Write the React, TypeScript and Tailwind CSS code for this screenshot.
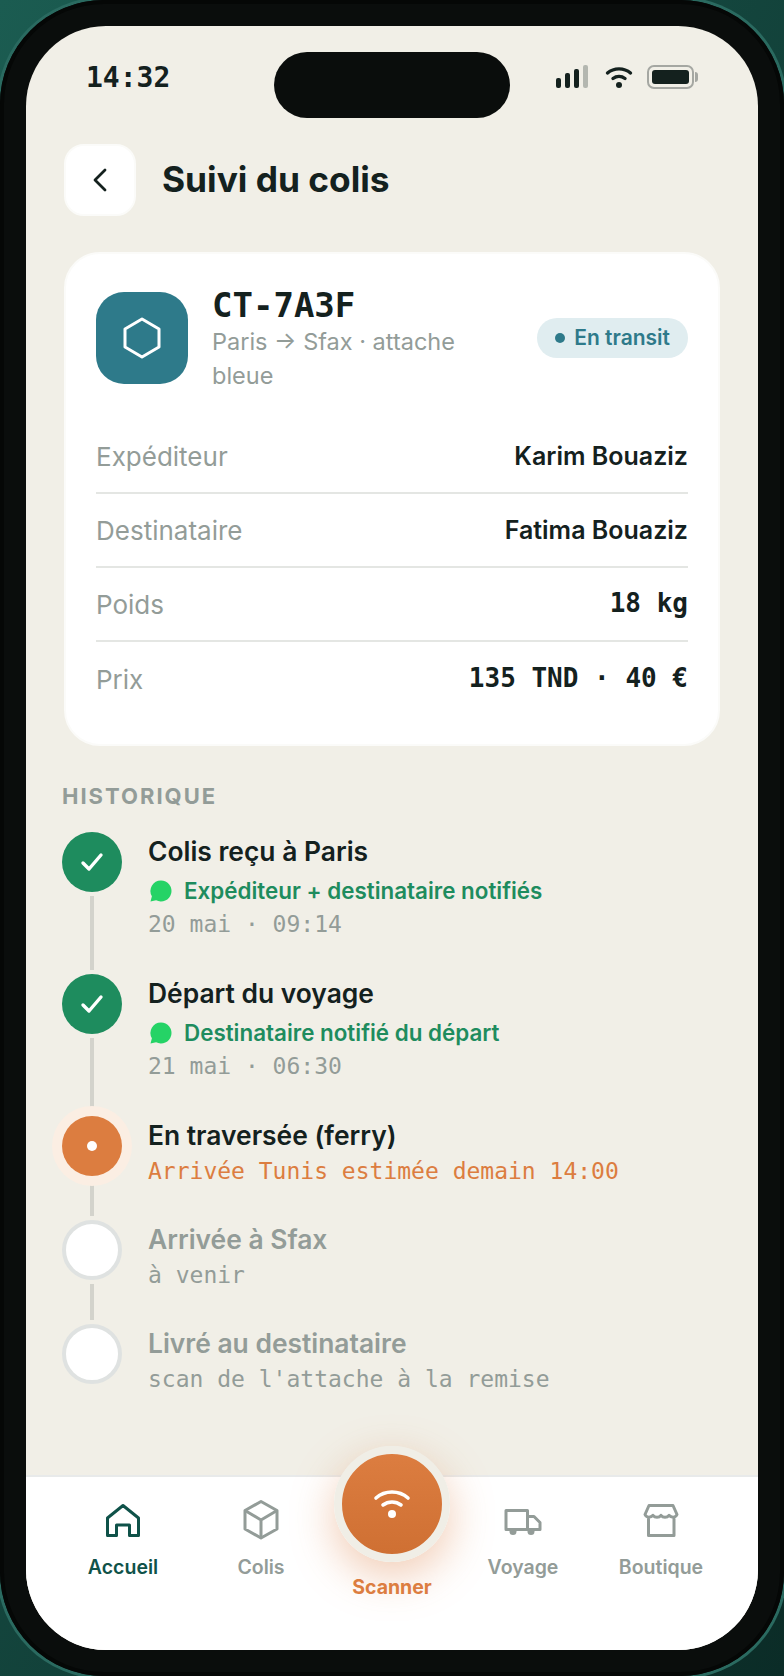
const sans = "font-['Inter','Noto_Sans',sans-serif]";
const mono = "font-['DejaVu_Sans_Mono','Liberation_Mono',monospace]";

type Step = {
  title: string;
  state: "done" | "current" | "todo";
  notice?: string;
  note: string;
};

const details = [
  { label: "Expéditeur", value: "Karim Bouaziz" },
  { label: "Destinataire", value: "Fatima Bouaziz" },
  { label: "Poids", value: "18 kg", numeric: true },
  { label: "Prix", value: "135 TND · 40 €", numeric: true },
];

const steps: Step[] = [
  { title: "Colis reçu à Paris", state: "done", notice: "Expéditeur + destinataire notifiés", note: "20 mai · 09:14" },
  { title: "Départ du voyage", state: "done", notice: "Destinataire notifié du départ", note: "21 mai · 06:30" },
  { title: "En traversée (ferry)", state: "current", note: "Arrivée Tunis estimée demain 14:00" },
  { title: "Arrivée à Sfax", state: "todo", note: "à venir" },
  { title: "Livré au destinataire", state: "todo", note: "scan de l'attache à la remise" },
];

function StatusIcons() {
  return (
    <div className="flex items-center justify-end gap-[14px]">
      <svg width="36" height="24" viewBox="0 0 36 24">
        <rect x="1" y="13" width="5" height="10" rx="2" fill="#14211e" />
        <rect x="10" y="8" width="5" height="15" rx="2" fill="#14211e" />
        <rect x="19" y="4" width="5" height="19" rx="2" fill="#14211e" />
        <rect x="28" y="0" width="5" height="23" rx="2" fill="#b4b7b0" />
      </svg>
      <svg width="28" height="24" viewBox="0 0 28 24" fill="none" stroke="#14211e" strokeWidth="3.4" strokeLinecap="round">
        <path d="M2.5 8C9 2.5 19 2.5 25.5 8" />
        <path d="M8 13.5c3.6-2.8 8.4-2.8 12 0" />
        <circle cx="14" cy="20" r="3" fill="#14211e" stroke="none" />
      </svg>
      <div className="flex items-center gap-[1px]">
        <div className="h-[24px] w-[47px] rounded-[7px] border-2 border-[#a5a7a2] p-[3px]">
          <div className="h-full w-full rounded-[3px] bg-[#14211e]" />
        </div>
        <div className="h-[10px] w-[3px] rounded-r-sm bg-[#a5a7a2]" />
      </div>
    </div>
  );
}

function Marker({ state }: { state: Step["state"] }) {
  if (state === "done") {
    return (
      <div className="flex size-[60px] shrink-0 items-center justify-center rounded-full bg-[#1e8c5e]">
        <svg width="24" height="20" viewBox="0 0 24 20" fill="none" stroke="white" strokeWidth="3.4" strokeLinecap="round" strokeLinejoin="round">
          <path d="M3 11l6 6L21 3" />
        </svg>
      </div>
    );
  }
  if (state === "current") {
    // the halo sits on top of the connector lines
    return (
      <div className="relative z-10 flex size-[60px] shrink-0 items-center justify-center rounded-full bg-[#dc7d40] shadow-[0_0_0_10px_#fbeee3]">
        <div className="size-[10px] rounded-full bg-white" />
      </div>
    );
  }
  return <div className="size-[60px] shrink-0 rounded-full border-4 border-[#dfe2e1] bg-white" />;
}

function NavHome() {
  return (
    <svg width="44" height="44" viewBox="0 0 44 44" fill="none" stroke="#0f5249" strokeWidth="3" strokeLinejoin="round">
      <path d="M22 7.5L37.5 20v17.5h-9V27h-13v10.5h-9V20z" />
    </svg>
  );
}

function NavBox() {
  return (
    <svg width="44" height="44" viewBox="0 0 44 44" fill="none" stroke="#939c98" strokeWidth="3" strokeLinejoin="round">
      <path d="M22 3.5l16 9V31l-16 9-16-9V12.5z" />
      <path d="M6 12.5L22 22l16-9.5M22 22v18" />
    </svg>
  );
}

function NavTruck() {
  return (
    <svg width="44" height="44" viewBox="0 0 44 44" fill="none" stroke="#939c98" strokeWidth="3" strokeLinejoin="round">
      <path d="M5 12.5h21.5V31.5H5z" />
      <path d="M26.5 18.5h6.5l6 6v7H26.5z" />
      <circle cx="12" cy="33.5" r="3.5" fill="#939c98" stroke="none" />
      <circle cx="30" cy="33.5" r="3.5" fill="#939c98" stroke="none" />
    </svg>
  );
}

function NavStore() {
  return (
    <svg width="44" height="44" viewBox="0 0 44 44" fill="none" stroke="#939c98" strokeWidth="3" strokeLinejoin="round" strokeLinecap="round">
      <path d="M10 7.5h24l4 9c-1.5 3.5-5.5 3.5-8 .8-2 2.6-6 2.6-8 0-2 2.6-6 2.6-8 0-2.5 2.7-6.5 2.7-8-.8z" />
      <path d="M9.5 21v16.5h25.5V21" />
    </svg>
  );
}

export default function App() {
  return (
    <div className="h-[1676px] w-[784px] overflow-hidden bg-gradient-to-br from-[#1b5c51] to-[#0b2c27]">
      {/* Phone body */}
      <div className="flex h-full w-full rounded-[104px] bg-[#0a0d0c] p-[26px] shadow-[0_0_0_3px_#2a6a60,inset_0_0_0_4px_#050706]">
        <div className={`flex flex-1 flex-col overflow-hidden rounded-[80px] bg-[#f1efe7] text-[#14211e] ${sans}`}>
          {/* Status bar */}
          <div className="grid h-[118px] shrink-0 grid-cols-[1fr_236px_1fr] px-[60px] pt-[26px]">
            <div className={`pt-[8px] text-[28px] leading-[36px] font-bold ${mono}`}>14:32</div>
            <div className="h-[66px] rounded-full bg-[#0a0d0c]" />
            <div className="pt-[13px]">
              <StatusIcons />
            </div>
          </div>

          <main className="flex-1 px-[38px]">
            <header className="flex items-center gap-[26px]">
              <button className="flex size-[72px] items-center justify-center rounded-[20px] border-2 border-[#fbfbf9] bg-white">
                <svg width="16" height="24" viewBox="0 0 16 24" fill="none" stroke="#14211e" strokeWidth="2.8" strokeLinecap="round" strokeLinejoin="round">
                  <path d="M13 2L3 12l10 10" />
                </svg>
              </button>
              <h1 className="text-[35.3px] leading-[44px] font-bold">Suivi du colis</h1>
            </header>

            {/* Parcel card */}
            <section className="mt-[36px] rounded-[36px] border-2 border-[#fbfbf9] bg-white px-[30px] pt-[30px] pb-[28px]">
              <div className="flex h-[108px] items-start">
                <div className="mt-[8px] flex size-[92px] shrink-0 items-center justify-center rounded-[28px] bg-[#2e7a8a]">
                  <svg width="40" height="44" viewBox="0 0 40 44" fill="none" stroke="white" strokeWidth="3" strokeLinejoin="round">
                    <path d="M20 3l17 10v18L20 41 3 31V13z" />
                  </svg>
                </div>
                <div className="mt-[1px] ml-[24px] min-w-0 flex-1">
                  <div className={`text-[34px] leading-[40px] font-bold ${mono}`}>CT-7A3F</div>
                  <div className="pr-[20px] text-[23.5px] leading-[34px] text-[#939c98]">Paris → Sfax · attache bleue</div>
                </div>
                <div className="flex h-[40px] shrink-0 items-center gap-[9px] self-center rounded-full bg-[#e0edf0] px-[18px] text-[21px] font-semibold text-[#2e7a8a]">
                  <span className="size-[10px] rounded-full bg-[#2e7a8a]" />
                  En transit
                </div>
              </div>

              <div className="mt-[28px]">
                {details.map((row, i) => (
                  <div
                    key={row.label}
                    className={`flex h-[74px] items-center justify-between text-[26px] ${i < details.length - 1 ? "border-b-2 border-[#e4e6e3]" : ""}`}
                  >
                    <span className="text-[#939c98]">{row.label}</span>
                    <span className={row.numeric ? `-mt-[2px] font-bold ${mono}` : "pt-[2px] text-[25px] font-semibold"}>{row.value}</span>
                  </div>
                ))}
              </div>
            </section>

            <h2 className="mt-[36px] -ml-[2px] text-[22px] leading-[28px] font-bold tracking-[2px] text-[#939c98]">HISTORIQUE</h2>

            {/* Timeline */}
            <ol className="mt-[22px] -ml-[2px]">
              {steps.map((step, i) => {
                const last = i === steps.length - 1;
                return (
                  <li key={step.title} className="flex gap-[26px]">
                    <div className="flex w-[60px] shrink-0 flex-col items-center">
                      <Marker state={step.state} />
                      {!last && (
                        <div className={`w-[4px] flex-1 bg-[#d3d3cc] ${step.state === "current" ? "mt-0 mb-[4px]" : "my-[4px]"}`} />
                      )}
                    </div>
                    <div className={`min-w-0 flex-1 ${step.notice ? "pb-[36px]" : "pb-[32px]"}`}>
                      <div className={`text-[26.4px] leading-[38px] font-semibold ${step.state === "todo" ? "text-[#939c98]" : ""}`}>{step.title}</div>
                      {step.notice && (
                        <div className="mt-[2px] flex h-[38px] items-center gap-[12px] pl-[2px] text-[22.4px] font-semibold text-[#1e8c5e]">
                          <svg width="22" height="22" viewBox="0 0 22 22" className="shrink-0">
                            <path d="M11 0.5a10.5 10.5 0 1 1-4.9 19.8L0.5 21.5l1.4-5.2A10.5 10.5 0 0 1 11 0.5z" fill="#25d366" />
                          </svg>
                          {step.notice}
                        </div>
                      )}
                      <div
                        className={`text-[23px] ${step.notice ? "leading-[28px]" : "leading-[34px]"} ${mono} ${
                          step.state === "current" ? "text-[#dc7d40]" : "text-[#939c98]"
                        }`}
                      >
                        {step.note}
                      </div>
                    </div>
                  </li>
                );
              })}
            </ol>
          </main>

          {/* Bottom navigation */}
          <nav className="grid h-[175px] shrink-0 grid-cols-[1fr_1fr_124px_1fr_1fr] border-t-2 border-[#e8eaea] bg-white px-[28px] pt-[21px] text-[19.5px] leading-[28px] font-semibold text-[#939c98]">
            <div className="flex flex-col items-center gap-[11px] text-[#0f5249]">
              <NavHome />
              Accueil
            </div>
            <div className="flex flex-col items-center gap-[11px]">
              <NavBox />
              Colis
            </div>
            <div className="-mt-[52px] flex flex-col items-center gap-[11px] font-bold text-[#dc7d40]">
              <div className="flex size-[116px] items-center justify-center rounded-full border-8 border-[#f0eee6] bg-gradient-to-b from-[#dc7d40] to-[#cf7033] shadow-[0_14px_44px_rgba(220,125,64,0.4)]">
                <svg width="38" height="32" viewBox="0 0 38 32" fill="none" stroke="white" strokeWidth="3.6" strokeLinecap="round">
                  <path d="M3 10C12 2 26 2 35 10" />
                  <path d="M10 17c5.2-4 12.8-4 18 0" />
                  <circle cx="19" cy="26" r="4" fill="white" stroke="none" />
                </svg>
              </div>
              Scanner
            </div>
            <div className="flex flex-col items-center gap-[11px]">
              <NavTruck />
              Voyage
            </div>
            <div className="flex flex-col items-center gap-[11px]">
              <NavStore />
              Boutique
            </div>
          </nav>
        </div>
      </div>
    </div>
  );
}
